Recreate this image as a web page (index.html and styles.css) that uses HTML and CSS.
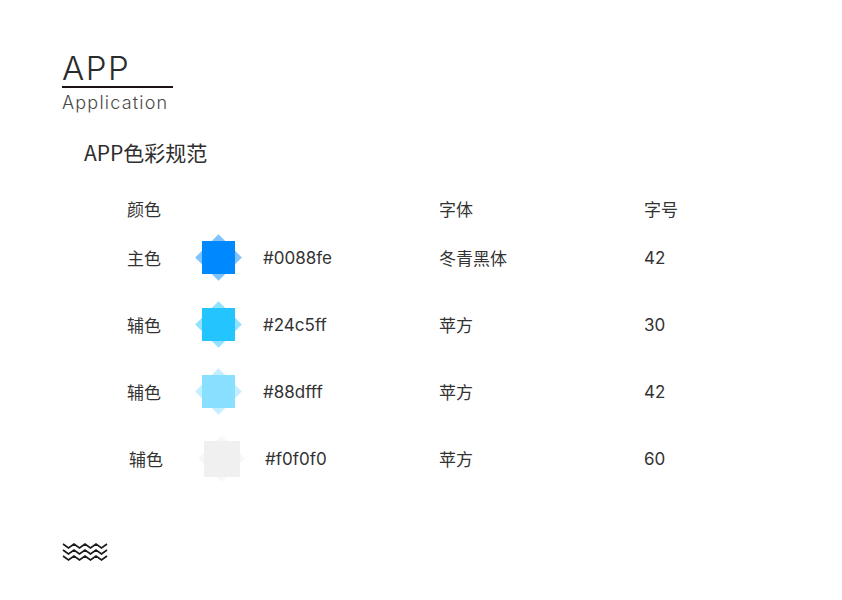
FILE: index.html
```html
<!DOCTYPE html>
<html lang="zh-CN">
<head>
<meta charset="utf-8">
<title>APP色彩规范</title>
<link rel="stylesheet" href="styles.css">
</head>
<body>
<div class="page">
  <header class="brand">
    <div class="brand-title">APP</div>
    <div class="brand-sub">Application</div>
  </header>

  <h1 class="section-title">APP色彩规范</h1>

  <div class="spec">
    <div class="spec-row spec-head">
      <div class="c-label">颜色</div>
      <div class="c-swatch"></div>
      <div class="c-hex"></div>
      <div class="c-font">字体</div>
      <div class="c-size">字号</div>
    </div>

    <div class="spec-row">
      <div class="c-label">主色</div>
      <div class="c-swatch"><span class="swatch sw-primary"><i class="diamond"></i><i class="square"></i></span></div>
      <div class="c-hex">#0088fe</div>
      <div class="c-font">冬青黑体</div>
      <div class="c-size">42</div>
    </div>

    <div class="spec-row">
      <div class="c-label">辅色</div>
      <div class="c-swatch"><span class="swatch sw-second"><i class="diamond"></i><i class="square"></i></span></div>
      <div class="c-hex">#24c5ff</div>
      <div class="c-font">苹方</div>
      <div class="c-size">30</div>
    </div>

    <div class="spec-row">
      <div class="c-label">辅色</div>
      <div class="c-swatch"><span class="swatch sw-third"><i class="diamond"></i><i class="square"></i></span></div>
      <div class="c-hex">#88dfff</div>
      <div class="c-font">苹方</div>
      <div class="c-size">42</div>
    </div>

    <div class="spec-row row-shift">
      <div class="c-label">辅色</div>
      <div class="c-swatch"><span class="swatch sw-grey"><i class="diamond"></i><i class="square"></i></span></div>
      <div class="c-hex">#f0f0f0</div>
      <div class="c-font">苹方</div>
      <div class="c-size">60</div>
    </div>
  </div>

  <footer class="footer">
    <svg class="waves" width="46" height="20" viewBox="0 0 46 20" aria-hidden="true">
      <polyline points="1,2 6.5,6 12,2 17.5,6 23,2 28.5,6 34,2 39.5,6 45,2" />
      <polyline points="1,8 6.5,12 12,8 17.5,12 23,8 28.5,12 34,8 39.5,12 45,8" />
      <polyline points="1,14 6.5,18 12,14 17.5,18 23,14 28.5,18 34,14 39.5,18 45,14" />
    </svg>
  </footer>
</div>
</body>
</html>
```

FILE: styles.css
```css
* { box-sizing: border-box; }

html, body {
  margin: 0;
  padding: 0;
  background: #ffffff;
}

body {
  font-family: "Inter", "Noto Sans CJK SC", sans-serif;
  color: #333333;
}

.page {
  width: 842px;
  height: 600px;
  padding: 51px 0 0 62px;
  display: flex;
  flex-direction: column;
  align-items: flex-start;
}

.brand {
  display: flex;
  flex-direction: column;
  width: 111px;
}

.brand-title {
  font-family: "Inter", sans-serif;
  font-weight: 300;
  font-size: 33px;
  line-height: 34px;
  letter-spacing: 1.5px;
  color: #2b2b2b;
  padding-bottom: 1px;
  border-bottom: 2px solid #1c1414;
}

.brand-sub {
  margin-top: 3px;
  font-family: "Inter", sans-serif;
  font-weight: 300;
  font-size: 18px;
  line-height: 24px;
  letter-spacing: 1.2px;
  color: #4a4a4a;
  white-space: nowrap;
}

.section-title {
  margin: 23px 0 0 22px;
  font-family: "Noto Sans CJK SC", sans-serif;
  font-weight: 400;
  font-size: 21px;
  line-height: 28px;
  color: #2e2e2e;
}

.spec {
  margin: 26px 0 0 65px;
  display: flex;
  flex-direction: column;
}

.spec-row {
  display: grid;
  grid-template-columns: 68px 46px 198px 205px 80px;
  align-items: center;
  height: 67px;
  font-size: 17px;
  color: #333333;
}

.spec-head {
  height: 32px;
}

.c-label { white-space: nowrap; }

.c-hex { padding-left: 22px; }

.c-swatch {
  display: flex;
  justify-content: center;
  align-items: center;
}

.row-shift .c-label { padding-left: 2px; }
.row-shift .c-hex { padding-left: 24px; }
.row-shift .c-swatch { padding-left: 3px; }

.swatch {
  position: relative;
  width: 47px;
  height: 47px;
  display: block;
}

.swatch i {
  position: absolute;
  left: 7px;
  top: 7px;
  width: 33px;
  height: 33px;
}

.swatch .diamond {
  transform: rotate(45deg);
  opacity: 0.5;
}

.sw-primary i { background: #0088fe; }
.sw-second i { background: #24c5ff; }
.sw-third i { background: #88dfff; }
.sw-grey i { background: #f0f0f0; }
.sw-grey .square { width: 36px; height: 36px; left: 5.5px; top: 5.5px; }

.footer {
  margin-top: 50px;
}

.waves {
  display: block;
}

.waves polyline {
  fill: none;
  stroke: #1a1a1a;
  stroke-width: 1.6;
  stroke-linejoin: miter;
}
```
